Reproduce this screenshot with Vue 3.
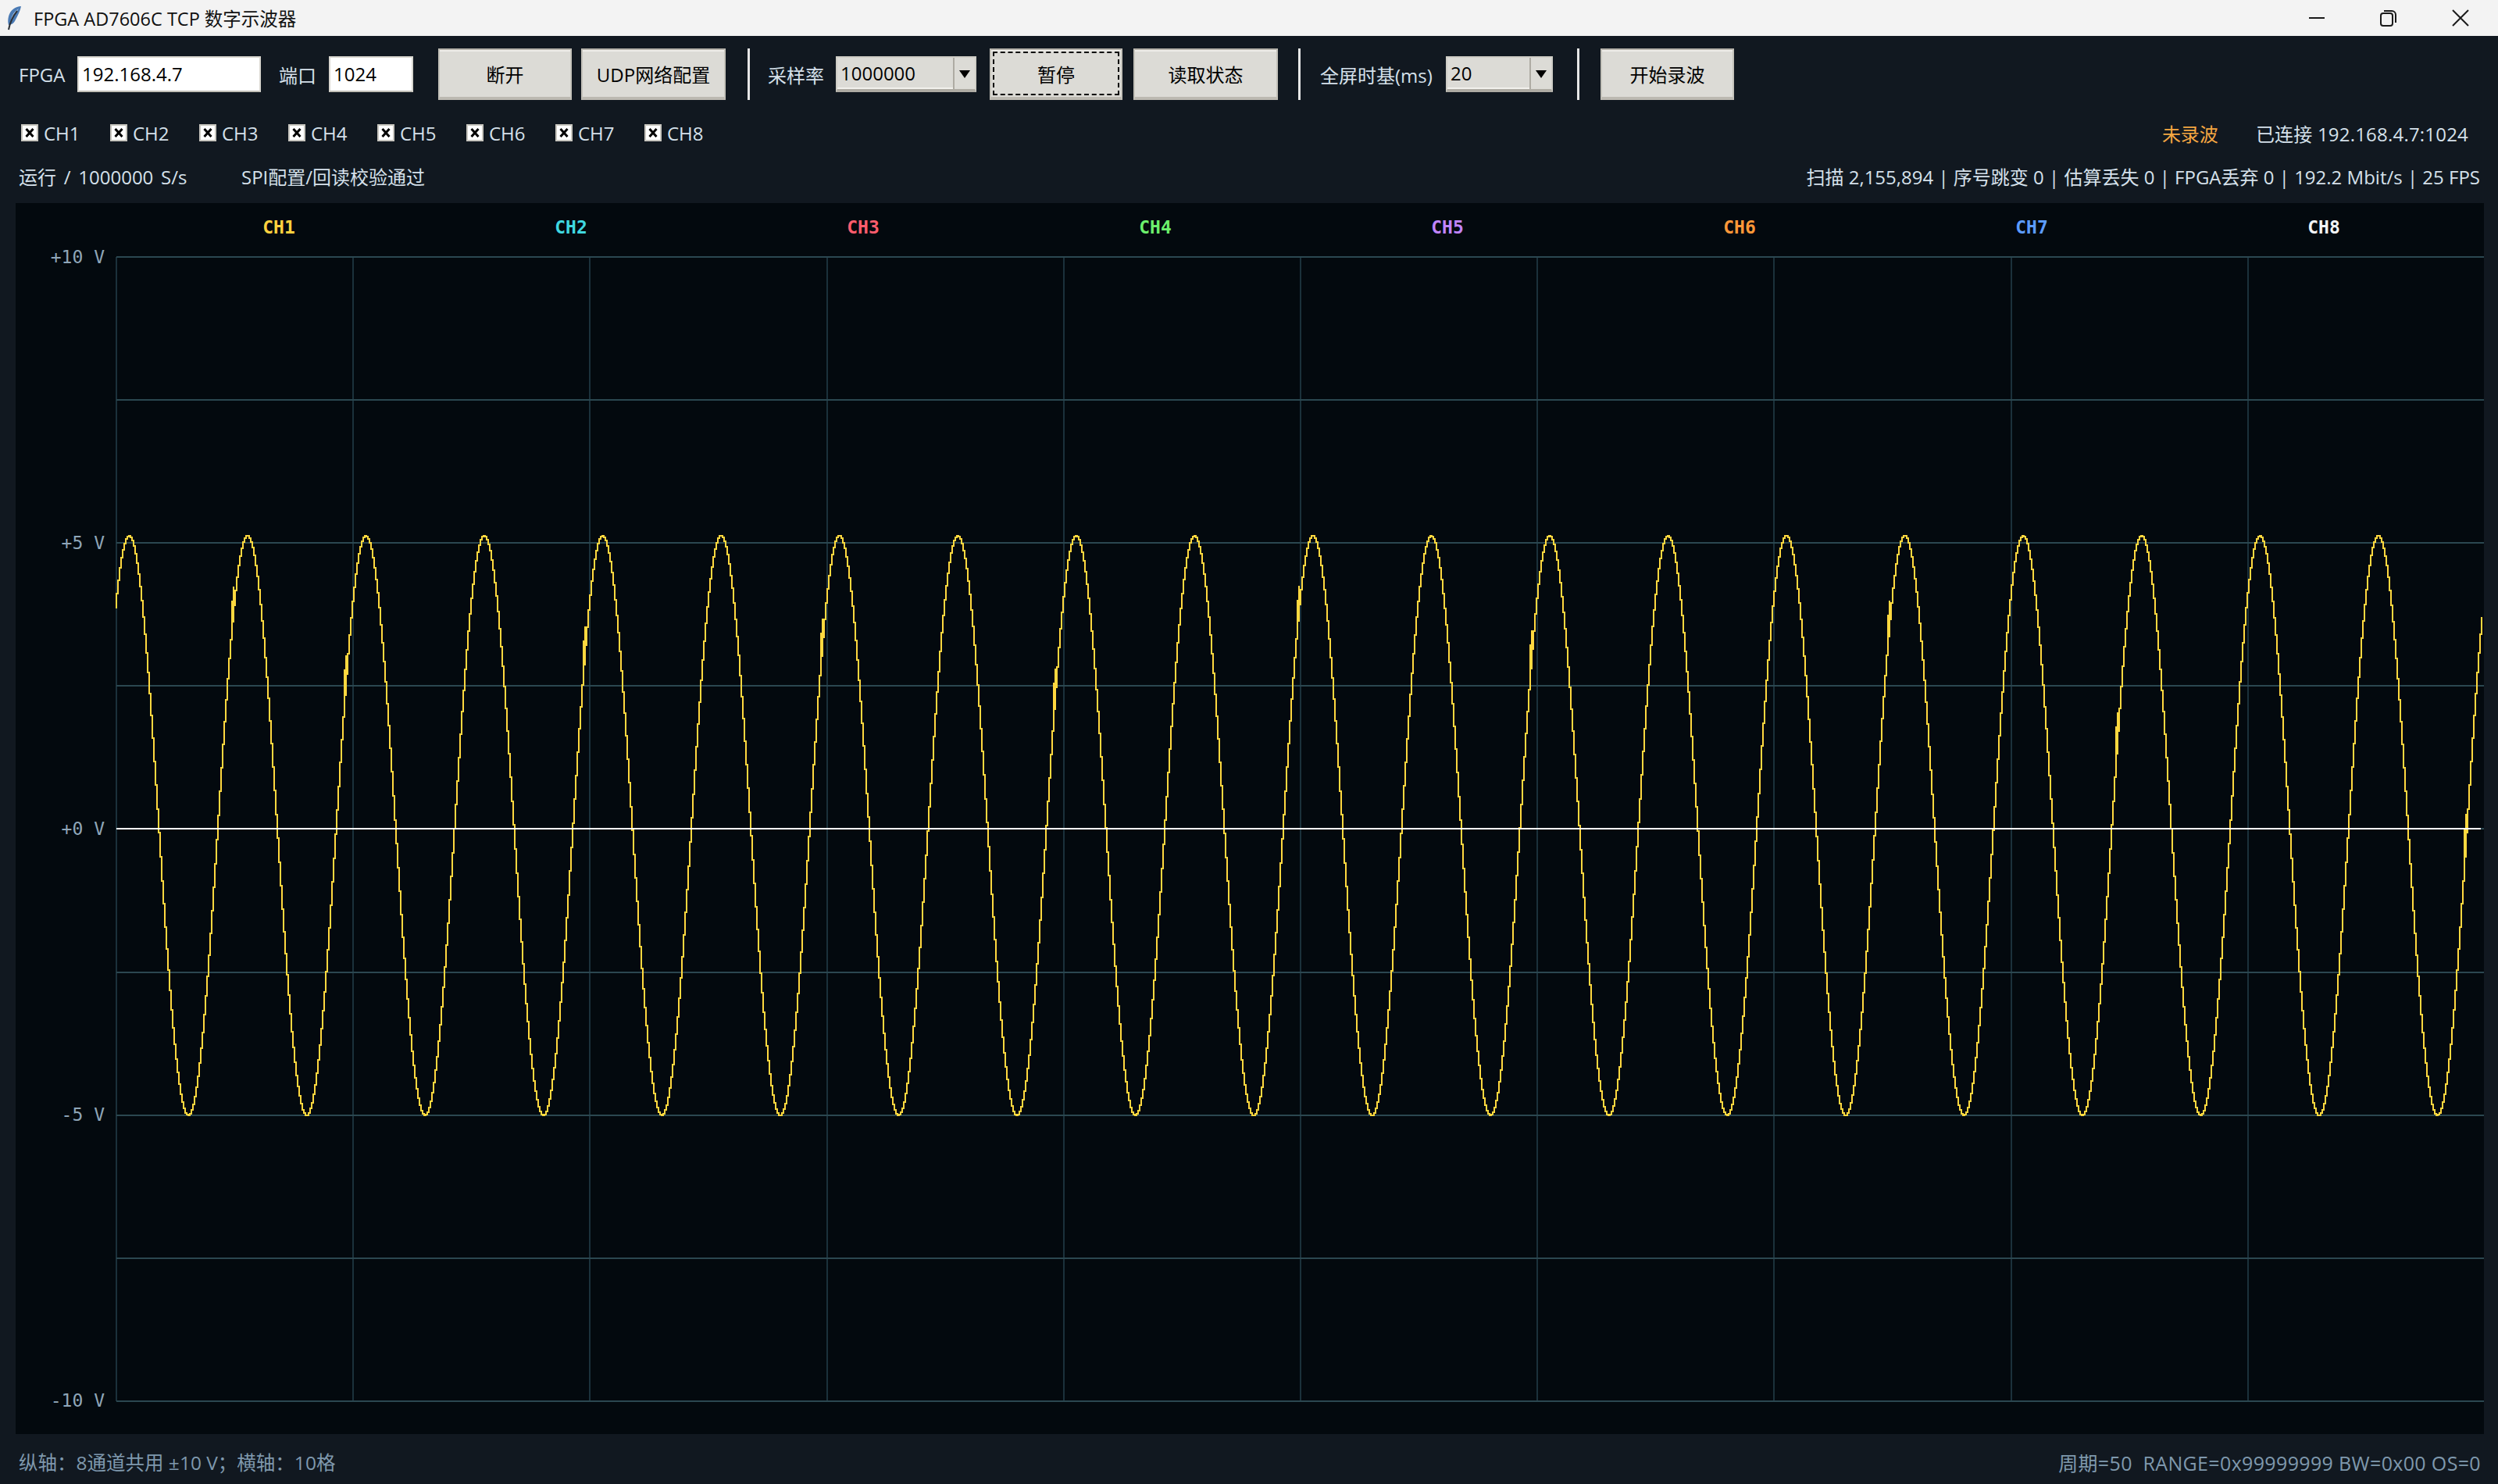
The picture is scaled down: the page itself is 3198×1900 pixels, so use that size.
<template>
  <div class="window">
    <div class="titlebar">
      <svg class="app-icon" width="20" height="32" viewBox="0 0 20 32">
        <path d="M19 1C12 1 5 6 3 14c-1 4-1 8 0 11 3 0 7-2 9-7 3-6 6-11 7-17z" fill="#4a7ab4" />
        <path d="M16 4C11 7 8 11 6 18l2-1c2-4 5-9 8-13z" fill="#b3cdea" />
        <path d="M14 7C9 13 5 21 3 31" fill="none" stroke="#2c3138" stroke-width="2" />
      </svg>
      <span class="title">FPGA AD7606C TCP 数字示波器</span>
      <div class="win-btns">
        <svg width="22" height="22" viewBox="0 0 22 22"><path d="M1 11h20" stroke="#1a1a1a" stroke-width="2" /></svg>
        <svg width="22" height="22" viewBox="0 0 22 22" fill="none" stroke="#1a1a1a" stroke-width="2">
          <rect x="1" y="5" width="15" height="16" rx="3" />
          <path d="M5 2h10a5 5 0 0 1 5 5v10" />
        </svg>
        <svg width="22" height="22" viewBox="0 0 22 22"><path d="M1 1l20 20M21 1L1 21" stroke="#1a1a1a" stroke-width="2" /></svg>
      </div>
    </div>

    <div class="toolbar">
      <span class="lbl l-fpga">FPGA</span>
      <div class="entry e-ip">192.168.4.7</div>
      <span class="lbl l-port">端口</span>
      <div class="entry e-port">1024</div>
      <button class="btn b-disc">断开</button>
      <button class="btn b-udp">UDP网络配置</button>
      <i class="sep s1"></i>
      <span class="lbl l-rate">采样率</span>
      <div class="combo c-rate"><span class="combo-val">1000000</span><span class="combo-arrow"></span></div>
      <button class="btn b-pause"><span class="focus">暂停</span></button>
      <button class="btn b-read">读取状态</button>
      <i class="sep s2"></i>
      <span class="lbl l-base">全屏时基(ms)</span>
      <div class="combo c-base"><span class="combo-val">20</span><span class="combo-arrow"></span></div>
      <i class="sep s3"></i>
      <button class="btn b-rec">开始录波</button>
    </div>

    <div class="channels">
      <label v-for="c in channels" :key="c.name" class="chk">
        <span class="box">
          <svg width="12" height="12" viewBox="0 0 12 12"><path d="M1.5 1l9 10M10.5 1l-9 10" stroke="#000" stroke-width="3" /></svg>
        </span>
        <span>{{ c.name }}</span>
      </label>
      <span class="rec">未录波</span>
      <span class="conn">已连接 192.168.4.7:1024</span>
    </div>

    <div class="status">
      <span class="run">运行 / 1000000 S/s</span>
      <span>SPI配置/回读校验通过</span>
      <span class="stats">扫描 2,155,894 | 序号跳变 0 | 估算丢失 0 | FPGA丢弃 0 | 192.2 Mbit/s | 25 FPS</span>
    </div>

    <svg class="scope" width="3160" height="1576" viewBox="0 0 3160 1576">
      <g shape-rendering="crispEdges">
        <path v-for="x in vLines" :key="'v' + x" :d="`M${x} ${gridTop}V${gridBottom}`" class="grid-v" />
        <path v-for="y in hLines" :key="'h' + y" :d="`M${gridLeft} ${y}H${gridRight}`" class="grid-h" />
        <path :d="wave" class="wave" />
        <path :d="blobs" class="wave" />
        <path :d="`M${gridLeft} ${zeroY}H${gridRight - 4}`" class="zero" />
      </g>
      <text v-for="(c, i) in channels" :key="c.name" class="ch-label" :x="337 + i * 374" y="39" :fill="c.color" text-anchor="middle">{{ c.name }}</text>
      <text v-for="a in axis" :key="a.text" class="axis-label" x="114" :y="a.y" text-anchor="end">{{ a.text }}</text>
    </svg>

    <div class="footer">
      <span class="foot-left">纵轴：8通道共用 ±10 V；横轴：10格</span>
      <span class="foot-right">周期=50&nbsp; RANGE=0x99999999 BW=0x00 OS=0</span>
    </div>
  </div>
</template>

<script setup>
const channels = [
  { name: 'CH1', color: '#ffd23f' },
  { name: 'CH2', color: '#3fd8e0' },
  { name: 'CH3', color: '#ff5c6c' },
  { name: 'CH4', color: '#6cf06c' },
  { name: 'CH5', color: '#c084fc' },
  { name: 'CH6', color: '#ff9838' },
  { name: 'CH7', color: '#5c9cff' },
  { name: 'CH8', color: '#f2f4f6' }
]

// svg sits at x=20, y=260 in the window
const gridLeft = 129
const gridRight = 3160
const gridTop = 69
const gridBottom = 1534
const zeroY = 801

const vLines = Array.from({ length: 10 }, (_, i) => Math.round(gridLeft + i * 303.2))
const hLines = Array.from({ length: 9 }, (_, i) => Math.round(gridTop + i * 183.1))

const axis = [
  { text: '+10 V', y: 77 },
  { text: '+5 V', y: 443 },
  { text: '+0 V', y: 809 },
  { text: '-5 V', y: 1175 },
  { text: '-10 V', y: 1541 }
]

const period = 151.55
const peakX = 144.5
const waveY = (x) => Math.round(797 - 371 * Math.cos((2 * Math.PI * (x - peakX)) / period))

// 1 kHz sine, one column of samples every 2px
const buildWave = () => {
  let d = `M${gridLeft} ${waveY(gridLeft - 2)}`
  for (let x = gridLeft; x <= gridRight - 2; x += 2) {
    d += `H${x}V${waveY(x)}`
  }
  return d
}
const wave = buildWave()

// small jitter on the rising edges: [which peak, radians before it]
const jitter = [
  [1, 0.72], [2, 1.02], [4, 0.92], [6, 0.83], [8, 1.1],
  [10, 0.7], [12, 0.95], [15, 0.78], [17, 1.2], [20, 1.57]
]
const buildBlobs = () => {
  let d = ''
  for (const [k, a] of jitter) {
    const x = gridLeft + 2 * Math.round((peakX + k * period - (a * period) / (2 * Math.PI) - gridLeft) / 2)
    const y = waveY(x)
    d += `M${x} ${y - 24}V${y + 12}M${x - 2} ${y - 6}V${y + 30}`
  }
  return d
}
const blobs = buildBlobs()
</script>

<style>
html, body {
  margin: 0;
  background: #111820;
}
</style>

<style scoped>
.window {
  width: 3198px;
  height: 1900px;
  display: flex;
  flex-direction: column;
  background: #111820;
  color: #d5e0ea;
  font-family: "Open Sans", "Noto Sans CJK SC", sans-serif;
  font-size: 24px;
  overflow: hidden;
}
.titlebar {
  height: 46px;
  flex: none;
  display: flex;
  align-items: center;
  background: #f3f3f3;
  color: #111;
  padding-left: 8px;
}
.app-icon {
  margin-right: 15px;
}
.title {
  font-size: 23.5px;
}
.win-btns {
  margin-left: auto;
  margin-right: 37px;
  display: flex;
  align-items: center;
  gap: 70px;
}
.toolbar {
  height: 66px;
  margin-top: 16px;
  flex: none;
  display: flex;
  align-items: center;
  padding-left: 24px;
}
.toolbar > * {
  flex: none;
}
.lbl {
  color: #d5e0ea;
  white-space: nowrap;
}
.l-fpga { width: 75px; }
.l-port { width: 64px; margin-left: 23px; }
.l-rate { width: 87px; margin-left: 23px; }
.l-base { width: 161px; margin-left: 25px; }
.entry {
  height: 46px;
  box-sizing: border-box;
  background: #fff;
  border: 2px solid;
  border-color: #d9d7d0 #d9d7d0 #c2bfb7 #d9d7d0;
  color: #000;
  line-height: 42px;
  padding-left: 4px;
}
.e-ip { width: 235px; }
.e-port { width: 108px; }
.btn {
  height: 66px;
  box-sizing: border-box;
  padding: 0;
  background: #dcdbd6;
  border: 2px solid #c4c2ba;
  border-top-color: #b4b1a9;
  border-bottom: 4px solid #bcb9b1;
  box-shadow: inset 0 2px 0 #eeede9;
  color: #000;
  font: inherit;
  display: flex;
  align-items: center;
  justify-content: center;
}
.b-disc { width: 171px; margin-left: 32px; }
.b-udp { width: 185px; margin-left: 12px; }
.sep {
  width: 3px;
  height: 66px;
  background: #e6e6e6;
}
.s1 { margin-left: 28px; }
.s2 { margin-left: 26px; }
.s3 { margin-left: 31px; }
.combo {
  height: 46px;
  box-sizing: border-box;
  background: #dcdbd6;
  border: 2px solid #cfcdc6;
  border-bottom: 4px solid #aeaba3;
  display: flex;
  color: #000;
  line-height: 40px;
}
.combo-val {
  flex: 1;
  padding-left: 4px;
  box-shadow: inset 0 -2px 0 #f2f1ed;
  border-right: 2px solid #aeaba3;
}
.combo-arrow {
  width: 26px;
  position: relative;
}
.combo-arrow::after {
  content: "";
  position: absolute;
  left: 6px;
  top: 16px;
  border-left: 7px solid transparent;
  border-right: 7px solid transparent;
  border-top: 10px solid #000;
}
.c-rate { width: 180px; }
.c-base { width: 137px; }
.b-pause { width: 170px; margin-left: 17px; }
.focus {
  width: 162px;
  height: 56px;
  box-sizing: border-box;
  border: 2px dashed #000;
  display: flex;
  align-items: center;
  justify-content: center;
}
.b-read { width: 185px; margin-left: 14px; }
.b-rec { width: 171px; margin-left: 27px; }
.channels {
  height: 22px;
  margin-top: 31px;
  flex: none;
  display: flex;
  align-items: center;
  padding: 0 38px 0 27px;
}
.chk {
  width: 114px;
  display: flex;
  align-items: center;
  gap: 7px;
  color: #d5e0ea;
  flex: none;
}
.box {
  width: 22px;
  height: 22px;
  box-sizing: border-box;
  background: #fff;
  border: 2px solid #c8c6bf;
  display: flex;
  align-items: center;
  justify-content: center;
}
.rec {
  margin-left: auto;
  color: #f5a742;
}
.conn {
  margin-left: 48px;
  letter-spacing: 0.2px;
}
.status {
  height: 30px;
  margin-top: 29px;
  flex: none;
  display: flex;
  align-items: center;
  padding: 0 23px 0 24px;
  white-space: nowrap;
}
.run {
  width: 285px;
  word-spacing: 3.5px;
}
.stats {
  margin-left: auto;
}
.scope {
  margin: 20px 0 0 20px;
  flex: none;
  display: block;
  background: #03090e;
}
.grid-v {
  stroke: #1b313b;
  stroke-width: 2;
  fill: none;
}
.grid-h {
  stroke: #2b4750;
  stroke-width: 2;
  fill: none;
}
.zero {
  stroke: #ffffff;
  stroke-width: 2;
  fill: none;
}
.wave {
  stroke: #ffd83f;
  stroke-width: 2;
  fill: none;
}
.ch-label {
  font-family: "DejaVu Sans Mono", monospace;
  font-size: 23px;
  font-weight: 700;
}
.axis-label {
  font-family: "DejaVu Sans Mono", monospace;
  font-size: 23px;
  fill: #8fa6b8;
}
.footer {
  flex: 1;
  display: flex;
  justify-content: space-between;
  align-items: center;
  padding: 7px 22px 0 24px;
  color: #7f98ad;
}
.foot-left {
  font-size: 24.5px;
}
.foot-right {
  font-size: 25px;
  letter-spacing: 0.35px;
}
</style>
